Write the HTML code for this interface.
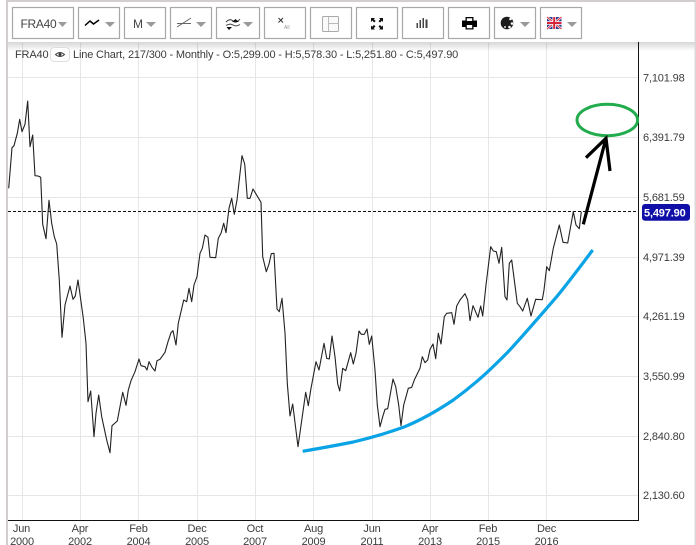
<!DOCTYPE html>
<html><head><meta charset="utf-8">
<style>
html,body{margin:0;padding:0;background:#fff;width:696px;height:545px;overflow:hidden}
svg{display:block}
text{font-family:"Liberation Sans",sans-serif;font-size:11px;letter-spacing:-.16px;fill:#3c3c3c}
.btn{fill:#fff;stroke:#a8a8a8;stroke-width:1.2}
.car{fill:#9a9a9a}
.g{stroke:#e6e6e6;stroke-width:1;fill:none}
</style></head><body>
<svg width="696" height="545" viewBox="0 0 696 545" xmlns="http://www.w3.org/2000/svg">
<defs><linearGradient id="sh" x1="0" y1="0" x2="0" y2="1"><stop offset="0" stop-color="#000" stop-opacity=".16"/><stop offset="1" stop-color="#000" stop-opacity="0"/></linearGradient></defs>
<rect width="696" height="545" fill="#fff"/>
<g class="g">
<path d="M22.5 43V521M80.5 43V521M138.5 43V521M197.5 43V521M255.5 43V521M313.5 43V521M372.5 43V521M430.5 43V521M488.5 43V521M546.5 43V521"/>
<path d="M8 77.5H638M8 137.5H638M8 197.5H638M8 257.5H638M8 316.5H638M8 376.5H638M8 436.5H638M8 495.5H638"/>
</g>
<rect x="7" y="42" width="689" height="9" fill="url(#sh)"/>
<rect x="6" y="0" width="2" height="545" fill="#d2cece"/>
<rect x="694.5" y="0" width="1.5" height="545" fill="#dcd8d8"/>
<rect x="7" y="0" width="689" height="2" fill="#d2cece"/>
<rect x="8" y="2" width="686.5" height="40" fill="#fff"/>
<path d="M638.5 42V521M8 520.5H639" stroke="#111" stroke-width="1" fill="none"/>
<path d="M8 211.5H638" stroke="#111" stroke-width="1" stroke-dasharray="3 2" fill="none"/>

<polyline fill="none" stroke="#222" stroke-width="1.1" stroke-linejoin="round" points="8.7,188.3 12,147.7 14,145.7 17.3,133.3 19.7,119.3 22,131.7 25,124.3 27.7,101 30,146.7 32.7,135 35,175.7 38,176 40.7,177.3 42.7,224.3 46,238.7 49,200.3 51.7,223.3 54.3,236.7 56.7,244 59.3,280 62,337.3 65,305 70,286 73,299.3 75.3,296 78,280 81,301.7 83.3,318.3 86,343.3 88,401.7 90.7,391 94,436.7 96,413.3 98.7,395 101.7,416.7 106.7,440 110,452.7 112,425.7 117.3,421 122.7,392.3 126,405.3 128.3,390 131,380.7 135,371.7 139,359 141,365.7 145,366.7 147,370 149,361.7 152,367.3 155,371 157,360.7 160,359.3 165,352.3 168,341.7 171,332.7 173,330.7 176,345 178.3,323.3 183.7,300 186.7,301.7 189,288.3 191.7,301.7 194,285 197,276.7 200,253.3 202.3,248.3 205,235 208,237.3 210,257.3 215.7,257.7 218.3,238.3 221,233.3 223.7,223.3 226,232.7 229,208.3 231.7,198.3 234.3,214.3 237,200 242,155.7 244.7,164 247.3,198.3 250,198.3 253,189 261,202.3 262.7,256.7 266.3,271.7 269,264 271.3,253.7 274,253.3 277,309 279.3,311.7 282,298.3 285,333 287.3,383.3 290,416 292.7,404 298,446.7 305.7,392.3 308.3,405.7 310.7,390 316,361.7 319,370 324,343.3 326.7,358.3 329.3,359 332,336 335,356.7 337.7,384 339.7,391 342.7,368.3 345.7,370.7 350.7,352.7 353.3,364 356,353.3 359,331 361.3,334.3 364.3,334.3 367,329 369.3,344.3 371.7,336 375,370 377.3,405 380,426.7 382.7,416.7 385,409.3 387.7,408.7 393,379 395.7,386.7 398.7,405 401,425.7 403.7,405 406.3,395.7 408.3,388.3 411.7,387.3 414.3,380 420,368.3 422.3,356.7 425,362.7 427.7,360 430,349.3 433,344 435.7,358.7 438.3,333.3 441,344 444.3,316.7 446.7,313.3 451.7,312.7 454,324.3 456.7,306 460,300 465,293.7 467.7,300 470,320.7 473,305.7 478,317.3 480.7,306 482.7,316 486,285 490.7,246.7 493.3,251 496.3,251.7 499,263.3 501.7,247.3 505,296.7 507,300 509.3,263.3 511.7,260 517.3,303.3 520,306.7 522.7,311 527.3,298.3 531,316 535.7,299.3 542.3,299.7 544,290 546.7,266.7 549.3,270.7 553.3,248.3 559.3,225 563,242.3 567.7,243 573.3,211.7 576,225 579.3,228.7 581.3,211.7"/>

<path d="M302.7 451.300C320 448.300 336.700 445.300 353.300 442C370 438 386.700 433.300 403.300 427.300C420 420.500 437 411 453.300 400C465 391.500 476 382.500 486.700 372.700C494 366 500 360 506.700 353.300C523 336 540 316 556.700 296.700C568 283 580 267 592.700 250" fill="none" stroke="#0aa3e6" stroke-width="3.200"/>
<ellipse cx="607.300" cy="120" rx="30.300" ry="15.700" fill="none" stroke="#22ac4d" stroke-width="3"/>
<path d="M583.300 224.300L606 138.300M586 157.700L606 138.300L610 171" fill="none" stroke="#000" stroke-width="3.200"/>

<g text-anchor="start">
<text x="643" y="81.500">7,101.98</text>
<text x="643" y="141">6,391.79</text>
<text x="643" y="201">5,681.59</text>
<text x="643" y="261">4,971.39</text>
<text x="643" y="320">4,261.19</text>
<text x="643" y="380">3,550.99</text>
<text x="643" y="440">2,840.80</text>
<text x="643" y="499">2,130.60</text>
</g>
<rect x="642" y="204" width="48" height="16.700" rx="3" fill="#1010a8"/>
<text x="644" y="216.500" style="fill:#fff;font-weight:bold">5,497.90</text>

<g text-anchor="middle">
<text x="21.500" y="532">Jun</text><text x="22" y="545">2000</text>
<text x="80" y="532">Apr</text><text x="80" y="545">2002</text>
<text x="138.500" y="532">Feb</text><text x="138.500" y="545">2004</text>
<text x="197" y="532">Dec</text><text x="197" y="545">2005</text>
<text x="255" y="532">Oct</text><text x="255" y="545">2007</text>
<text x="313.500" y="532">Aug</text><text x="313.500" y="545">2009</text>
<text x="372" y="532">Jun</text><text x="372" y="545">2011</text>
<text x="430" y="532">Apr</text><text x="430" y="545">2013</text>
<text x="488" y="532">Feb</text><text x="488" y="545">2015</text>
<text x="546.500" y="532">Dec</text><text x="546.500" y="545">2016</text>
</g>

<text x="15" y="58">FRA40</text>
<rect x="50.500" y="47.500" width="19" height="14" rx="4" fill="#fff" stroke="#ddd"/>
<path d="M55.500 54.500Q60 50.500 64.500 54.500Q60 58.500 55.500 54.500Z" fill="none" stroke="#444" stroke-width="1"/><circle cx="60" cy="54.500" r="1.500" fill="#333"/>
<text x="73" y="58">Line Chart, 217/300 - Monthly - O:5,299.00 - H:5,578.30 - L:5,251.80 - C:5,497.90</text>

<rect class="btn" x="12.500" y="7.500" width="61" height="31"/>
<rect class="btn" x="78.500" y="7.500" width="41" height="31"/>
<rect class="btn" x="124.500" y="7.500" width="41" height="31"/>
<rect class="btn" x="170.500" y="7.500" width="41" height="31"/>
<rect class="btn" x="216.500" y="7.500" width="43" height="31"/>
<rect class="btn" x="264.500" y="7.500" width="41" height="31"/>
<rect class="btn" x="310.500" y="7.500" width="41" height="31"/>
<rect class="btn" x="356.500" y="7.500" width="41" height="31"/>
<rect class="btn" x="402.500" y="7.500" width="41" height="31"/>
<rect class="btn" x="448.500" y="7.500" width="41" height="31"/>
<rect class="btn" x="494.500" y="7.500" width="41" height="31"/>
<rect class="btn" x="540.500" y="7.500" width="41" height="31"/>

<text x="20.500" y="28" style="font-size:12px;letter-spacing:-.3px;fill:#444">FRA40</text>
<text x="133" y="28" style="font-size:12px;fill:#444">M</text>
<path class="car" d="M58 22H67L62.500 27ZM105 22H115L110 27ZM146 22H156L151 27ZM196 22H206L201 27ZM243 22H253L248 27ZM520 22H530L525 27ZM567 22H577L572 27Z"/>

<path d="M85 25.500L90 21L93.500 24L99 20" fill="none" stroke="#000" stroke-width="1.500"/>
<path d="M177 27L191 18M177 23.500H191" fill="none" stroke="#666" stroke-width="1"/>
<path d="M226 22Q230 18 233 21T240 19M226 25.500Q230 23 233 25T240 24.500" fill="none" stroke="#444" stroke-width="1"/>
<path d="M232 22L235.500 19L239 22ZM226.500 27H232L229 30Z" fill="#111"/>
<path d="M278.500 18L283 22.500M283 18L278.500 22.500" stroke="#333" stroke-width="1"/>
<text x="284" y="29" style="font-size:5px;letter-spacing:0;fill:#999">All</text>
<rect x="322.500" y="16.500" width="16" height="15" rx="1" fill="#fafafa" stroke="#aaa"/>
<path d="M328.500 17V31M329 23.500H338" stroke="#bbb" stroke-width="1"/>
<path d="M371 18H375L373.800 19.200L375.700 21L374.200 22.500L372.300 20.600L371 22ZM383 18V22L381.800 20.800L380 22.600L378.500 21.100L380.300 19.300L379 18ZM371 29.500V25.500L372.200 26.700L374 24.900L375.500 26.400L373.700 28.200L375 29.500ZM383 29.500H379L380.200 28.300L378.500 26.500L380 25L381.800 26.800L383 25.500Z" fill="#111"/>
<path d="M416.500 23H418V28H416.500ZM419.500 20H421V28H419.500ZM422.500 18H424V28H422.500ZM425.500 19.500H427.500V28H425.500Z" fill="#444"/>
<path d="M465.500 17H473.500V20.500H477V27H473.500V29.500H465.500V27H462V20.500H465.500ZM466.800 18.200V21H472.200V18.200ZM466.800 25V28.300H472.200V25Z" fill="#000" fill-rule="evenodd"/>
<circle cx="507" cy="23" r="6.300" fill="#1c1c1c"/>
<circle cx="510.500" cy="19" r="1.300" fill="#fff"/><circle cx="512" cy="23.500" r="1.300" fill="#fff"/><circle cx="509.500" cy="27" r="1.300" fill="#fff"/><circle cx="505" cy="27" r="1" fill="#ddd"/>
<g>
<rect x="547" y="17" width="14.500" height="12" fill="#2a3c8e"/>
<path d="M547 17L561.500 29M561.500 17L547 29" stroke="#fff" stroke-width="2.400"/>
<path d="M547 17L561.500 29M561.500 17L547 29" stroke="#d6253a" stroke-width="1"/>
<path d="M554.200 17V29M547 23H561.500" stroke="#fff" stroke-width="3.500"/>
<path d="M554.200 17V29M547 23H561.500" stroke="#d6253a" stroke-width="2"/>
</g>
</svg>
</body></html>
